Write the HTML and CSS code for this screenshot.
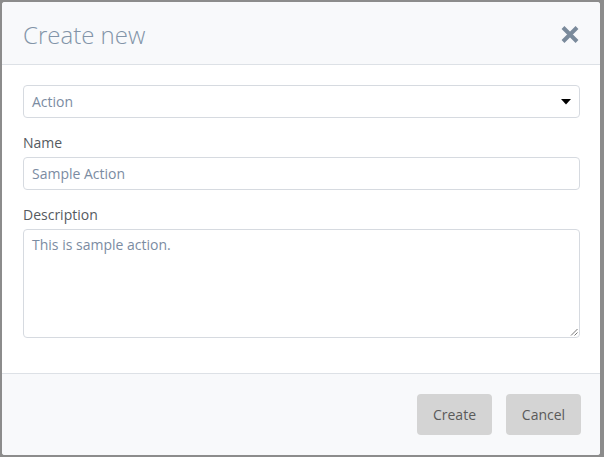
FILE: index.html
```html
<!DOCTYPE html>
<html>
<head>
<meta charset="utf-8">
<link rel="stylesheet" href="styles.css">
</head>
<body>
<div class="modal">
  <div class="modal-header">
    <h1 class="title">Create new</h1>
    <span class="close"><svg width="18" height="17" viewBox="0 0 18 17"><path d="M2 1.5 L16 15.5 M16 1.5 L2 15.5" stroke="#7a8a9b" stroke-width="4"/></svg></span>
  </div>
  <div class="modal-body">
    <div class="select">
      <span>Action</span>
      <svg class="caret" width="10" height="6" viewBox="0 0 10 6"><path d="M0 0 H10 L5 5.5 Z" fill="#000"/></svg>
    </div>
    <label class="label">Name</label>
    <div class="input">Sample Action</div>
    <label class="label">Description</label>
    <div class="textarea">This is sample action.
      <svg class="grip" width="8" height="8" viewBox="0 0 8 8"><path d="M7.5 1 L1 7.5 M7.5 4.5 L4.5 7.5" stroke="#777" stroke-width="1"/></svg>
    </div>
  </div>
  <div class="modal-footer">
    <button class="btn">Create</button>
    <button class="btn">Cancel</button>
  </div>
</div>
</body>
</html>
```

FILE: styles.css
```css
html, body {
  margin: 0;
  padding: 0;
}
body {
  background: #8c8c8c;
  font-family: "Open Sans", "Liberation Sans", sans-serif;
  font-size: 14px;
  height: 457px;
  overflow: hidden;
}
.modal {
  margin: 2px 0 0 2px;
  width: 598px;
  height: 453px;
  background: #fff;
  border-radius: 3px;
  display: flex;
  flex-direction: column;
  overflow: hidden;
}
.modal-header {
  height: 62px;
  background: #f8f9fb;
  border-bottom: 1px solid #dde1e6;
  display: flex;
  align-items: center;
  justify-content: space-between;
  padding: 0 21px 0 21px;
}
.title {
  margin: 0;
  font-size: 24px;
  font-weight: 300;
  color: #8294a8;
  line-height: 30px;
  padding-top: 3px;
}
.close {
  display: flex;
  margin-top: 3px;
}
.modal-body {
  padding: 20px 20px 0 21px;
  height: 288px;
  border-bottom: 1px solid #dde1e6;
  display: flex;
  flex-direction: column;
}
.select, .input, .textarea {
  border: 1px solid #d6dae0;
  border-radius: 4px;
  color: #7b8ca2;
  padding: 0 8px;
  box-sizing: border-box;
}
.select {
  height: 33px;
  display: flex;
  align-items: center;
  justify-content: space-between;
  margin-bottom: 15px;
}
.caret {
  margin-right: 0px;
  margin-top: 1px;
}
.label {
  color: #555a60;
  line-height: 20px;
  margin-bottom: 4px;
}
.input {
  height: 33px;
  display: flex;
  align-items: center;
  margin-bottom: 15px;
}
.textarea {
  height: 109px;
  padding-top: 5px;
  line-height: 20px;
  position: relative;
}
.grip {
  position: absolute;
  right: 1px;
  bottom: 1px;
}
.modal-footer {
  flex: 1;
  background: #f8f9fb;
  display: flex;
  justify-content: flex-end;
  gap: 14px;
  padding: 20px 19px 0 0;
}
.btn {
  width: 75px;
  height: 41px;
  background: #d4d4d4;
  border: none;
  border-radius: 4px;
  font-family: "Open Sans", "Liberation Sans", sans-serif;
  font-size: 14px;
  color: #5a5a5a;
  padding: 0;
}
```
